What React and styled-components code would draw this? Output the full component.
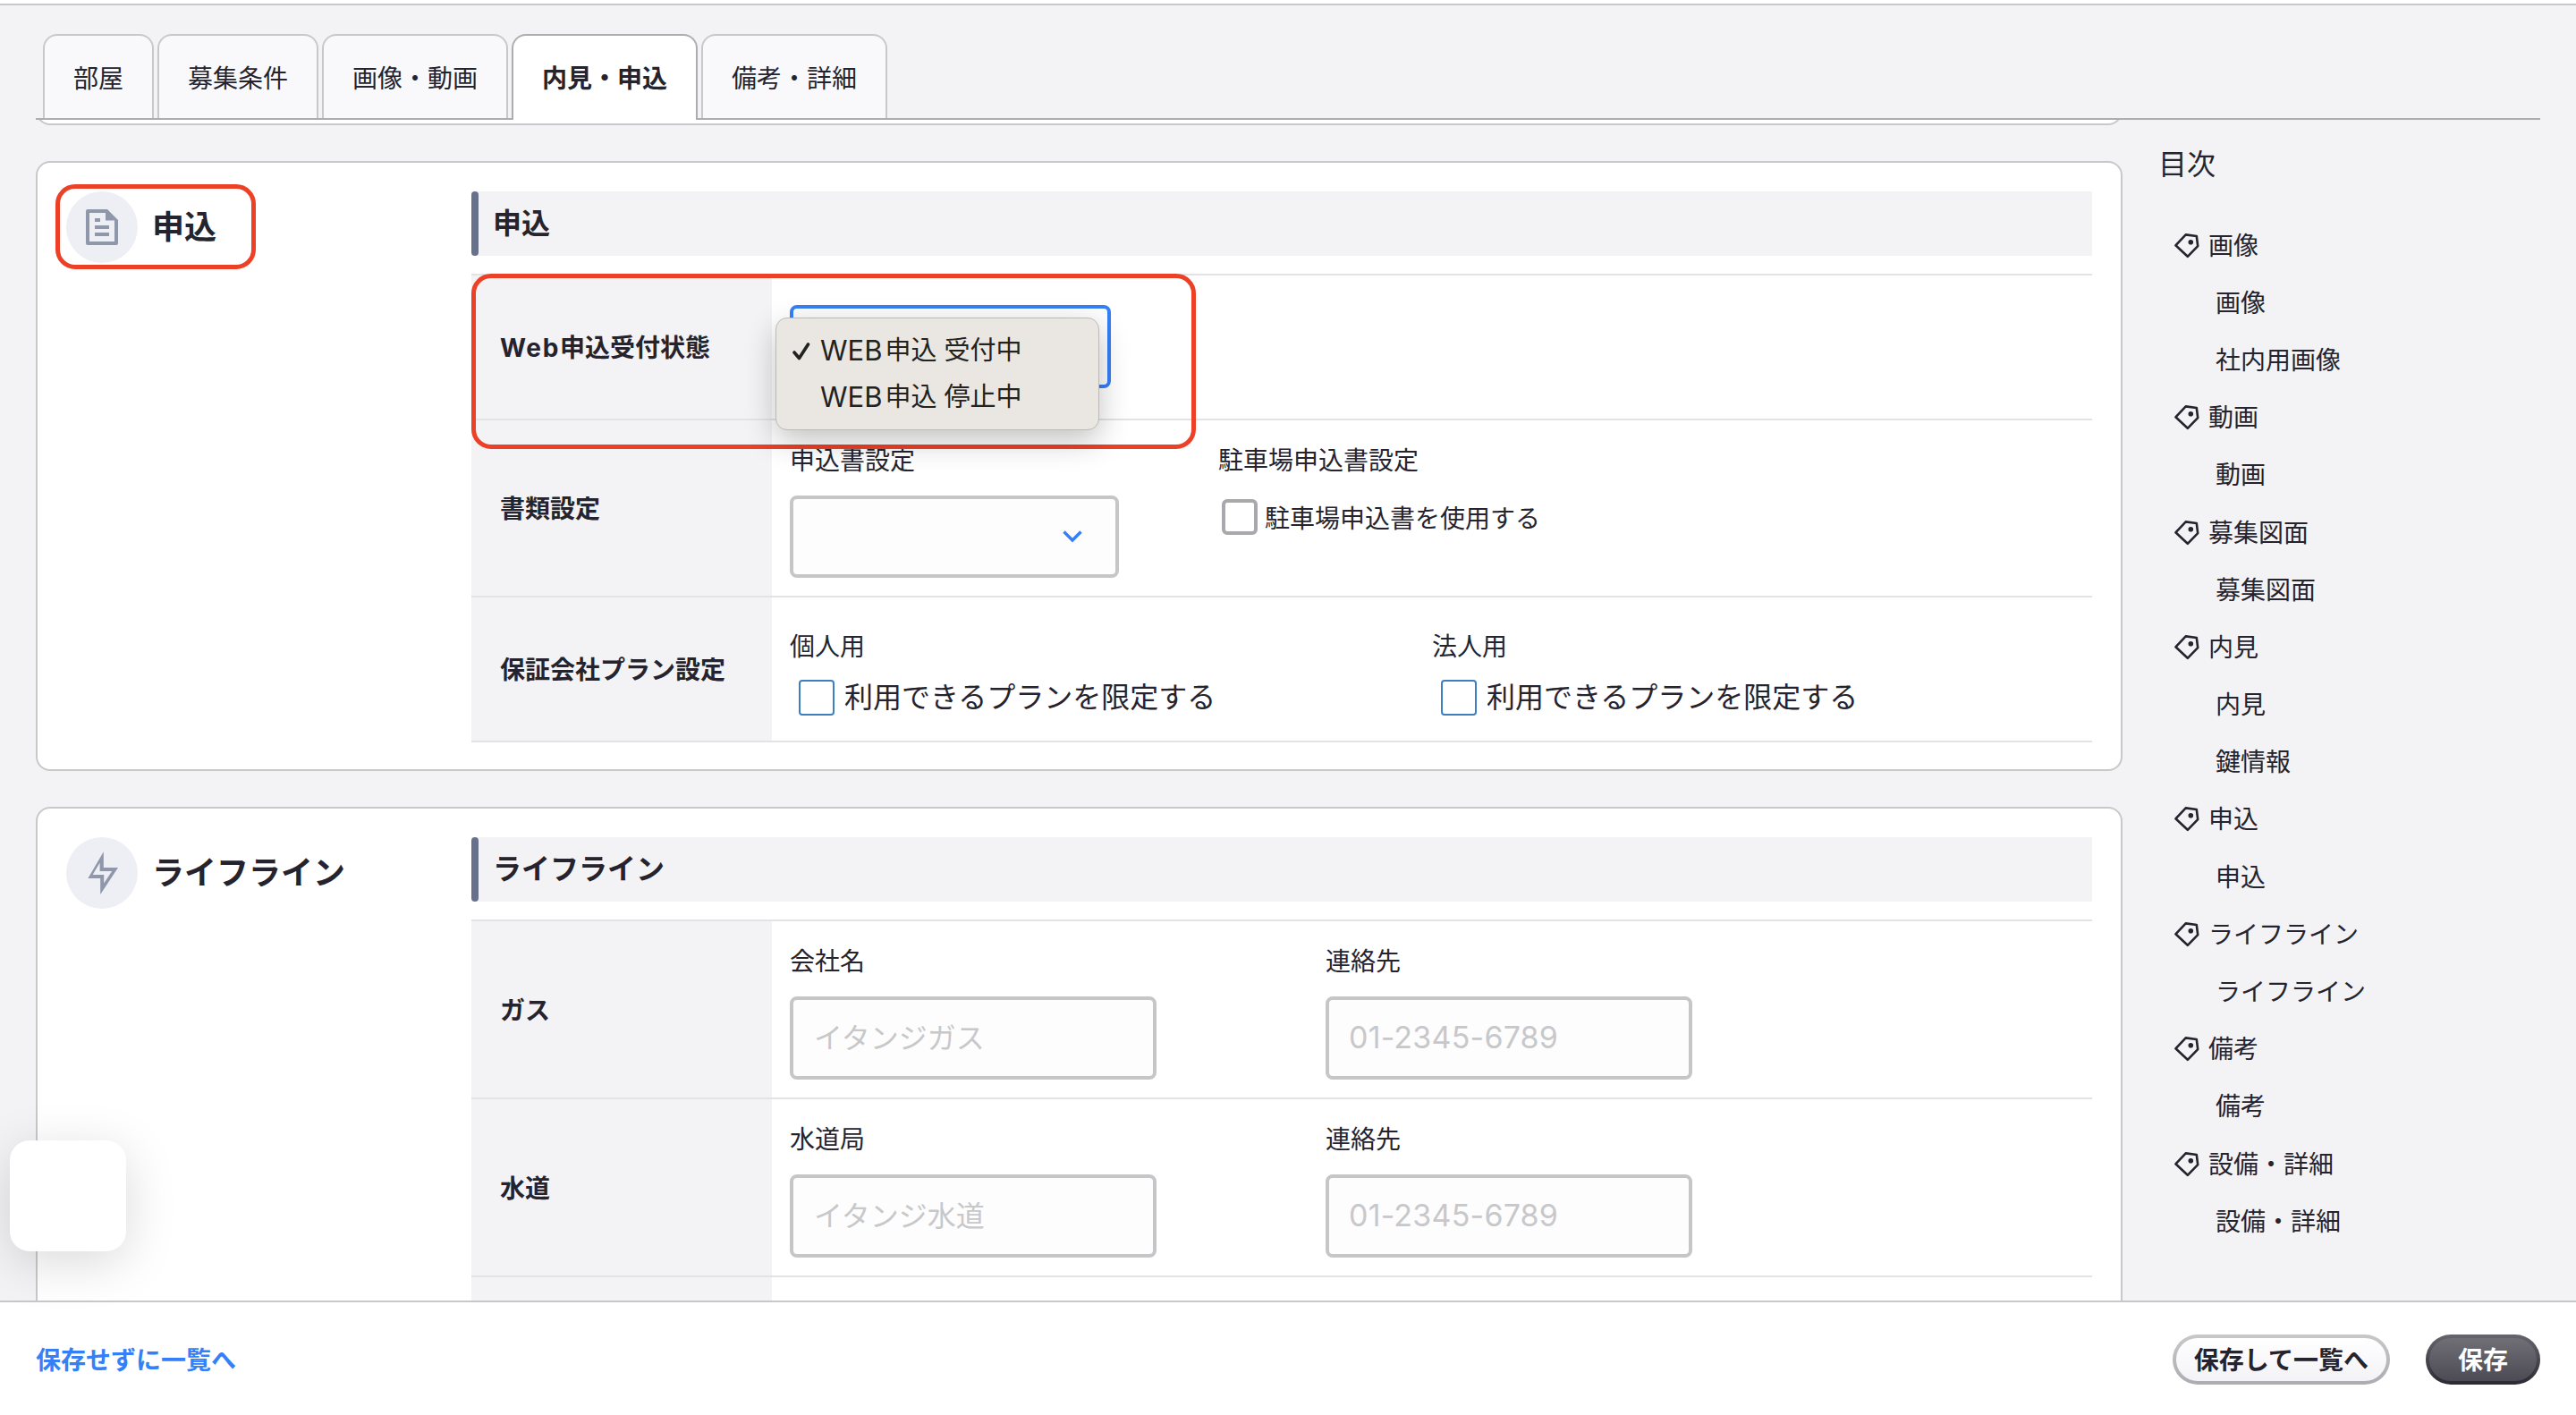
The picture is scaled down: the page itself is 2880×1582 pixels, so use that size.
import React from "react";
import styled, { createGlobalStyle, css } from "styled-components";

const ink = "#25232e";
const line = "#c8c8ca";
const softLine = "#e3e3e5";
const surface = "#f3f3f5";
const blue = "#357ff7";
const red = "#ec4127";

const GlobalStyle = createGlobalStyle`
  * { box-sizing: border-box; }
  html, body { margin: 0; padding: 0; }
  body {
    width: 2880px;
    height: 1582px;
    overflow: hidden;
    background: ${surface};
    color: ${ink};
    font-family: "Inter", "Noto Sans CJK JP", sans-serif;
    font-size: 28px;
    line-height: 42px;
  }
  button, input { font-family: inherit; }
`;

const Page = styled.div`
  position: relative;
  display: flex;
  flex-direction: column;
  width: 2880px;
  height: 1582px;
  background: ${surface};
`;

const TopStrip = styled.div`
  flex: none;
  height: 6px;
  background: #fff;
  border-bottom: 2px solid ${line};
`;

const Tabs = styled.nav`
  flex: none;
  display: flex;
  align-items: flex-start;
  gap: 4px;
  height: 128px;
  margin: 0 40px;
  padding: 32px 8px 0;
  border-bottom: 2px solid #adadaf;
`;

const Tab = styled.a`
  display: flex;
  align-items: center;
  height: 94px;
  padding: 3px 32px 0;
  white-space: nowrap;
  border: 2px solid ${line};
  border-bottom: none;
  border-radius: 16px 16px 0 0;
  background: #f9f9fb;
  ${(p) =>
    p.$active &&
    css`
      height: 96px;
      padding-bottom: 2px;
      background: #fff;
      border-color: #adadaf;
      font-weight: 700;
    `}
`;

const Body = styled.div`
  flex: 1;
  min-height: 0;
  display: flex;
  padding-left: 40px;
  overflow: hidden;
`;

const Main = styled.main`
  flex: none;
  width: 2333px;
  display: flex;
  flex-direction: column;
  gap: 40px;
`;

const PreviousCard = styled.div`
  flex: none;
  height: 6px;
  overflow: hidden;
  display: flex;
  align-items: flex-end;
`;

const PreviousCardEdge = styled.div`
  flex: 1;
  height: 40px;
  background: #fff;
  border: 2px solid ${line};
  border-radius: 16px;
`;

const Card = styled.section`
  flex: none;
  display: grid;
  grid-template-columns: 453px 1fr;
  padding: 32px 32px 30px;
  background: #fff;
  border: 2px solid ${line};
  border-radius: 16px;
`;

const SectionTitle = styled.h2`
  position: relative;
  justify-self: start;
  align-self: start;
  display: flex;
  align-items: center;
  gap: 16px;
  margin: 0;
  font-size: 36px;
  line-height: 54px;
  font-weight: 700;
`;

const IconDisc = styled.span`
  display: flex;
  width: 80px;
  height: 80px;
  border-radius: 50%;
  background: #eeeff4;
`;

const Panel = styled.div`
  display: flex;
  flex-direction: column;
  gap: 20px;
`;

const PanelHeading = styled.h3`
  display: flex;
  align-items: center;
  gap: 16px;
  height: 72px;
  margin: 0;
  background: ${surface};
  font-size: 32px;
  font-weight: 700;
  &::before {
    content: "";
    width: 8px;
    height: 72px;
    border-radius: 4px;
    background: #67718c;
  }
`;

const Table = styled.div`
  position: relative;
  display: flex;
  flex-direction: column;
  border-top: 2px solid ${softLine};
`;

const Row = styled.div`
  display: flex;
  height: ${(p) => p.$height}px;
  border-bottom: 2px solid ${softLine};
`;

const RowLabel = styled.div`
  flex: none;
  display: flex;
  align-items: center;
  width: 336px;
  padding: 2px 0 0 32px;
  background: ${surface};
  font-weight: 700;
  white-space: nowrap;
`;

const LatinPart = styled.span`
  letter-spacing: 1.7px;
`;

const RowContent = styled.div`
  display: flex;
  padding: ${(p) => p.$top}px 0 0 20px;
`;

const Field = styled.div`
  flex: none;
  display: flex;
  flex-direction: column;
  align-items: flex-start;
  gap: ${(p) => p.$gap ?? 18}px;
  width: ${(p) => p.$width}px;
`;

const SelectBox = styled.div`
  position: relative;
  display: flex;
  align-items: center;
  justify-content: flex-end;
  width: ${(p) => (p.$focused ? 359 : 368)}px;
  height: ${(p) => (p.$focused ? 93 : 92)}px;
  padding-right: 36px;
  border: 4px solid ${(p) => (p.$focused ? blue : "#c6c6c8")};
  border-radius: 8px;
  background: #fdfdfe;
`;

const Menu = styled.ul`
  position: absolute;
  z-index: 3;
  top: 10px;
  left: -20px;
  width: 362px;
  height: 126px;
  margin: 0;
  padding: 10px 0;
  list-style: none;
  border: 1px solid #bdbab6;
  border-radius: 13px;
  background: #eae7e2;
  box-shadow: 0 12px 34px rgba(0, 0, 0, 0.24);
`;

const MenuItem = styled.li`
  display: flex;
  align-items: center;
  height: 52px;
  color: #222220;
  font-size: 29px;
  white-space: nowrap;
`;

const MenuMark = styled.span`
  display: flex;
  width: 49px;
  padding-left: 17px;
`;

const MenuLatin = styled.span`
  font-size: 31px;
  margin-right: 3px;
`;

const MenuWord = styled.span`
  margin-right: 8px;
`;

const TextInput = styled.input`
  width: 410px;
  height: 93px;
  padding: 0 ${(p) => (p.$latin ? 22 : 23)}px;
  border: 4px solid #c6c6c8;
  border-radius: 8px;
  background: #fdfdfe;
  font-size: 32px;
  outline: none;
  &::placeholder {
    color: #c8c8ca;
    opacity: 1;
    font-size: ${(p) => (p.$latin ? 34 : 32)}px;
    letter-spacing: ${(p) => (p.$latin ? 0.2 : 0)}px;
    font-weight: 400;
  }
`;

const CheckLabel = styled.label`
  display: flex;
  align-items: center;
  height: 40px;
  white-space: nowrap;
  gap: ${(p) => (p.$large ? 11 : 8)}px;
  margin-left: ${(p) => (p.$large ? 10 : 4)}px;
  font-size: ${(p) => (p.$large ? 32 : 28)}px;
`;

const CheckText = styled.span`
  padding-top: ${(p) => (p.$large ? 0 : 3)}px;
`;

const CheckBox = styled.span`
  width: 40px;
  height: 40px;
  background: #fff;
  border: ${(p) => (p.$large ? "2px solid #3d7fc1" : "4px solid #a9a9ad")};
  border-radius: ${(p) => (p.$large ? 4 : 6)}px;
`;

const Highlight = styled.div`
  position: absolute;
  z-index: 2;
  top: ${(p) => p.$top}px;
  left: ${(p) => p.$left}px;
  width: ${(p) => p.$width}px;
  height: ${(p) => p.$height}px;
  border: 5px solid ${red};
  border-radius: 22px;
  pointer-events: none;
`;

const Toc = styled.aside`
  padding: 28px 0 0 43px;
`;

const TocTitle = styled.div`
  margin-left: -3px;
  font-size: 32px;
  height: 44px;
  line-height: 44px;
  margin-bottom: 36.5px;
`;

const TocItem = styled.div`
  display: flex;
  align-items: center;
  gap: 9px;
  height: 64.2px;
  padding-left: ${(p) => (p.$child ? 61 : 14)}px;
  white-space: nowrap;
`;

const Footer = styled.footer`
  flex: none;
  display: flex;
  align-items: center;
  gap: 40px;
  height: 128px;
  padding: 2px 40px 0;
  background: #fff;
  border-top: 2px solid ${line};
`;

const BackLink = styled.a`
  margin-right: auto;
  padding-top: 2px;
  color: ${blue};
  font-weight: 700;
`;

const Button = styled.button`
  height: 56px;
  padding: 2px ${(p) => (p.$primary ? 32 : 20)}px 0;
  border: 4px solid transparent;
  border-radius: 28px;
  font-size: 28px;
  line-height: 42px;
  font-weight: 700;
  color: ${(p) => (p.$primary ? "#fff" : ink)};
  background: ${(p) =>
    p.$primary
      ? `linear-gradient(#706f76, #4c4a53) padding-box, linear-gradient(#66656c, #2b2934) border-box`
      : `linear-gradient(#ffffff, #f3f3f7) padding-box, linear-gradient(#c8c8ca, #adadb1) border-box`};
`;

const FloatingPanel = styled.div`
  position: absolute;
  z-index: 5;
  left: 11px;
  top: 1275px;
  width: 130px;
  height: 124px;
  border-radius: 22px;
  background: #fff;
  box-shadow: 0 12px 56px rgba(0, 0, 0, 0.15);
`;

const DocumentIcon = () => (
  <svg width="80" height="80" viewBox="0 0 80 80" fill="#8f97aa">
    <path
      fillRule="evenodd"
      d="M24 20H46L58 32V58a2 2 0 0 1-2 2H24a2 2 0 0 1-2-2V22a2 2 0 0 1 2-2ZM26 24V56H54V32.5H44V24Z"
    />
    <path d="M32 30h6v4h-6ZM32 38h16v4H32ZM32 46h16v4H32Z" />
  </svg>
);

const BoltIcon = () => (
  <svg width="80" height="80" viewBox="0 0 80 80" fill="#8f97aa">
    <path
      fillRule="evenodd"
      d="M41.8 16.3V34H58L38.2 64V46H24.4ZM37.6 28.4L29.6 42H42.2V51.4L51.2 38H37.6Z"
    />
  </svg>
);

const TagIcon = () => (
  <svg width="30" height="30" viewBox="0 0 30 30">
    <path
      d="M2.4 14.3L13.7 2.4L25.8 4L27.2 15.2L15.8 26.8Z"
      fill="none"
      stroke={ink}
      strokeWidth="2.6"
      strokeLinejoin="round"
    />
    <circle cx="19.3" cy="10.7" r="2.8" fill={ink} />
  </svg>
);

const Chevron = () => (
  <svg width="24" height="16" viewBox="0 0 24 16">
    <path d="M2.5 2.5L12 12L21.5 2.5" fill="none" stroke={blue} strokeWidth="3.4" />
  </svg>
);

const CheckMark = () => (
  <svg width="22" height="22" viewBox="0 0 22 22">
    <path
      d="M3 13L8.5 19.5L18.5 4"
      fill="none"
      stroke="#222220"
      strokeWidth="3.6"
      strokeLinecap="round"
      strokeLinejoin="round"
    />
  </svg>
);

const tabs = ["部屋", "募集条件", "画像・動画", "内見・申込", "備考・詳細"];

const toc = [
  ["画像", ["画像", "社内用画像"]],
  ["動画", ["動画"]],
  ["募集図面", ["募集図面"]],
  ["内見", ["内見", "鍵情報"]],
  ["申込", ["申込"]],
  ["ライフライン", ["ライフライン"]],
  ["備考", ["備考"]],
  ["設備・詳細", ["設備・詳細"]],
];

const options = [
  { status: "受付中", selected: true },
  { status: "停止中", selected: false },
];

const utilities = [
  { label: "ガス", field: "会社名", placeholder: "イタンジガス" },
  { label: "水道", field: "水道局", placeholder: "イタンジ水道" },
];

const PlanField = ({ title }) => (
  <Field $width={718} $gap={16}>
    <span>{title}</span>
    <CheckLabel $large>
      <CheckBox $large />
      <CheckText $large>利用できるプランを限定する</CheckText>
    </CheckLabel>
  </Field>
);

export default function App() {
  return (
    <>
      <GlobalStyle />
      <Page>
        <TopStrip />
        <Tabs>
          {tabs.map((t) => (
            <Tab key={t} $active={t === "内見・申込"}>
              {t}
            </Tab>
          ))}
        </Tabs>
        <Body>
          <Main>
            <PreviousCard>
              <PreviousCardEdge />
            </PreviousCard>

            <Card>
              <SectionTitle>
                <IconDisc>
                  <DocumentIcon />
                </IconDisc>
                申込
                <Highlight $top={-8} $left={-12} $width={224} $height={95} />
              </SectionTitle>
              <Panel>
                <PanelHeading>申込</PanelHeading>
                <Table>
                  <Row $height={162}>
                    <RowLabel>
                      <LatinPart>Web</LatinPart>申込受付状態
                    </RowLabel>
                    <RowContent $top={33}>
                      <SelectBox $focused>
                        <Menu>
                          {options.map((o) => (
                            <MenuItem key={o.status}>
                              <MenuMark>{o.selected && <CheckMark />}</MenuMark>
                              <MenuLatin>WEB</MenuLatin>
                              <MenuWord>申込</MenuWord>
                              {o.status}
                            </MenuItem>
                          ))}
                        </Menu>
                      </SelectBox>
                    </RowContent>
                  </Row>
                  <Row $height={198}>
                    <RowLabel>書類設定</RowLabel>
                    <RowContent $top={24}>
                      <Field $width={479}>
                        <span>申込書設定</span>
                        <SelectBox>
                          <Chevron />
                        </SelectBox>
                      </Field>
                      <Field $width={479} $gap={22}>
                        <span>駐車場申込書設定</span>
                        <CheckLabel>
                          <CheckBox />
                          <CheckText>駐車場申込書を使用する</CheckText>
                        </CheckLabel>
                      </Field>
                    </RowContent>
                  </Row>
                  <Row $height={162}>
                    <RowLabel>保証会社プラン設定</RowLabel>
                    <RowContent $top={34}>
                      <PlanField title="個人用" />
                      <PlanField title="法人用" />
                    </RowContent>
                  </Row>
                  <Highlight $top={-2} $left={0} $width={810} $height={196} />
                </Table>
              </Panel>
            </Card>

            <Card>
              <SectionTitle>
                <IconDisc>
                  <BoltIcon />
                </IconDisc>
                ライフライン
              </SectionTitle>
              <Panel>
                <PanelHeading>ライフライン</PanelHeading>
                <Table>
                  {utilities.map((u) => (
                    <Row key={u.label} $height={199}>
                      <RowLabel>{u.label}</RowLabel>
                      <RowContent $top={24}>
                        <Field $width={599}>
                          <span>{u.field}</span>
                          <TextInput placeholder={u.placeholder} />
                        </Field>
                        <Field $width={599}>
                          <span>連絡先</span>
                          <TextInput $latin placeholder="01-2345-6789" />
                        </Field>
                      </RowContent>
                    </Row>
                  ))}
                  <Row $height={199}>
                    <RowLabel />
                  </Row>
                </Table>
              </Panel>
            </Card>
          </Main>

          <Toc>
            <TocTitle>目次</TocTitle>
            {toc.map(([title, children]) => (
              <React.Fragment key={title}>
                <TocItem>
                  <TagIcon />
                  {title}
                </TocItem>
                {children.map((c) => (
                  <TocItem key={c} $child>
                    {c}
                  </TocItem>
                ))}
              </React.Fragment>
            ))}
          </Toc>
        </Body>
        <Footer>
          <BackLink>保存せずに一覧へ</BackLink>
          <Button>保存して一覧へ</Button>
          <Button $primary>保存</Button>
        </Footer>
        <FloatingPanel />
      </Page>
    </>
  );
}
